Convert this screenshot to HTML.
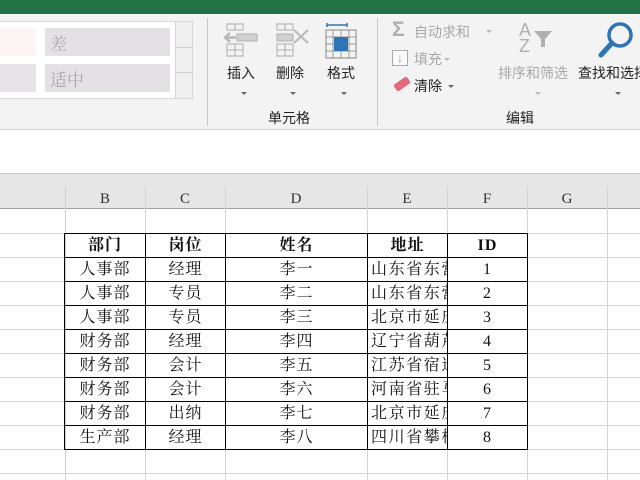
<!DOCTYPE html>
<html><head><meta charset="utf-8"><style>
*{margin:0;padding:0;box-sizing:border-box}
body{width:640px;height:480px;overflow:hidden;background:#fff;position:relative;font-family:"Liberation Sans","Noto Sans CJK SC",sans-serif}
.a{position:absolute}
.t{position:absolute;font-size:14px;color:#222;white-space:nowrap}
.g{color:#a8a8a8}
.cell{position:absolute;font-family:"Liberation Serif","Noto Serif CJK SC",serif;font-size:16px;color:#111;text-align:center;line-height:24px;height:24px;overflow:hidden;white-space:nowrap}
.vl{position:absolute;width:1px;background:#d4d4d4}
.hl{position:absolute;height:1px;background:#d4d4d4;left:0;width:640px}
.dd{position:absolute;width:0;height:0;border-left:3px solid transparent;border-right:3px solid transparent;border-top:3px solid #666}
td{border:1px solid #000;height:24px;padding:0;text-align:center;line-height:22px;white-space:nowrap;overflow:hidden;max-width:0;letter-spacing:1px}
td.l{text-align:left;padding-left:3px;text-overflow:clip;letter-spacing:1.6px}
</style></head><body>
<div class="a" style="left:0;top:0;width:640px;height:14px;background:#217346"></div>
<div class="a" style="left:0;top:14px;width:640px;height:115px;background:#f3f3f3"></div>
<div class="a" style="left:0;top:129px;width:640px;height:1px;background:#d2d2d2"></div>
<div class="a" style="left:0;top:21px;width:193px;height:78px;background:#fff;border:1px solid #d8d8d8;border-left:none"></div>
<div class="a" style="left:0;top:28px;width:36px;height:28px;background:#fdf4f6"></div>
<div class="a" style="left:0;top:64px;width:36px;height:28px;background:#e6e4e7"></div>
<div class="a" style="left:45px;top:28px;width:125px;height:28px;background:#e3e1e4"></div>
<div class="a" style="left:45px;top:64px;width:125px;height:28px;background:#e3e1e4"></div>
<div class="t g" style="left:50px;top:30px;font-size:17px;font-family:'Noto Serif CJK SC',serif">差</div>
<div class="t g" style="left:50px;top:66px;font-size:17px;font-family:'Noto Serif CJK SC',serif">适中</div>
<div class="a" style="left:175px;top:21px;width:18px;height:78px;background:#f0f0f0;border:1px solid #d8d8d8"></div>
<div class="a" style="left:175px;top:47px;width:18px;height:1px;background:#d0d0d0"></div>
<div class="a" style="left:175px;top:72px;width:18px;height:1px;background:#d0d0d0"></div>
<div class="a" style="left:207px;top:18px;width:1px;height:108px;background:#c8c8c8"></div>
<div class="a" style="left:377px;top:18px;width:1px;height:108px;background:#c8c8c8"></div>
<svg class="a" style="left:222px;top:20px" width="150" height="40">
<g fill="none" stroke="#b8b8b8" stroke-width="1.2">
<rect x="5" y="4" width="16" height="6"/><line x1="13" y1="4" x2="13" y2="10"/>
<rect x="5" y="24" width="16" height="12"/><line x1="13" y1="24" x2="13" y2="36"/><line x1="5" y1="30" x2="21" y2="30"/>
<rect x="15" y="14" width="20" height="7" fill="#d0d0d0"/>
<path d="M14 17.5H3M8 13l-5 4.5 5 4.5" stroke-width="2.5"/>
<rect x="55" y="4" width="16" height="6"/><line x1="63" y1="4" x2="63" y2="10"/>
<rect x="55" y="24" width="16" height="12"/><line x1="63" y1="24" x2="63" y2="36"/><line x1="55" y1="30" x2="71" y2="30"/>
<rect x="55" y="14" width="16" height="7" fill="#d0d0d0"/>
<path d="M72 10l14 13M86 10L72 23" stroke-width="2"/>
</g>
<g fill="none" stroke="#555" stroke-width="1">
<path d="M105 5h20M105 3v4M125 3v4" stroke="#2e75b6" stroke-width="1.5"/>
<rect x="104" y="10" width="30" height="28" stroke="#888"/>
<path d="M104 17h30M104 24h30M104 31h30M111 10v28M119 10v28M127 10v28" stroke="#999"/>
</g>
<rect x="112" y="17" width="14" height="14" fill="#2e75b6"/>
</svg>
<div class="t" style="left:227px;top:63px">插入</div>
<div class="t" style="left:276px;top:63px">删除</div>
<div class="t" style="left:327px;top:63px">格式</div>
<div class="dd" style="left:241px;top:92px"></div>
<div class="dd" style="left:290px;top:92px"></div>
<div class="dd" style="left:341px;top:92px"></div>
<div class="t" style="left:268px;top:108px">单元格</div>
<div class="t" style="left:392px;top:18px;font-size:21px;font-weight:bold;color:#b0b0b0">Σ</div>
<div class="t g" style="left:414px;top:22px">自动求和</div>
<div class="dd" style="left:486px;top:30px;border-top-color:#bbb"></div>
<div class="a" style="left:392px;top:50px;width:16px;height:16px;border:1px solid #aaa;background:#fafafa;color:#999;font-size:12px;text-align:center;line-height:14px">↓</div>
<div class="t g" style="left:414px;top:49px">填充</div>
<div class="dd" style="left:444px;top:58px;border-top-color:#bbb"></div>
<div class="a" style="left:394px;top:80px;width:16px;height:8px;background:#e06b7c;transform:rotate(-35deg);border-radius:2px"></div>
<div class="t" style="left:414px;top:76px">清除</div>
<div class="dd" style="left:448px;top:85px"></div>
<div class="t g" style="left:519px;top:22px;font-size:18px;line-height:16px;color:#b0b0b0">A<br>Z</div>
<svg class="a" style="left:533px;top:29px" width="22" height="20"><path d="M1 2h18l-7 8v8h-4v-8z" fill="#b0b0b0"/></svg>
<div class="t g" style="left:498px;top:63px">排序和筛选</div>
<div class="dd" style="left:535px;top:92px;border-top-color:#bbb"></div>
<svg class="a" style="left:596px;top:20px" width="44" height="40"><circle cx="24" cy="15" r="11" fill="none" stroke="#2e75b6" stroke-width="3.5"/><path d="M16 23L5 35" stroke="#2e75b6" stroke-width="5" stroke-linecap="round"/></svg>
<div class="t" style="left:578px;top:63px">查找和选择</div>
<div class="dd" style="left:615px;top:92px"></div>
<div class="t" style="left:506px;top:108px">编辑</div>
<div class="a" style="left:0;top:173px;width:640px;height:36px;background:#e6e6e6;border-top:1px solid #c6c6c6;border-bottom:1px solid #9f9f9f"></div>
<div class="vl" style="left:65px;top:186px;height:294px;background:#d0d0d0"></div>
<div class="vl" style="left:145px;top:186px;height:294px"></div>
<div class="vl" style="left:225px;top:186px;height:294px"></div>
<div class="vl" style="left:367px;top:186px;height:294px"></div>
<div class="vl" style="left:447px;top:186px;height:294px"></div>
<div class="vl" style="left:527px;top:186px;height:294px"></div>
<div class="vl" style="left:607px;top:186px;height:294px"></div>
<div class="hl" style="top:233px"></div><div class="hl" style="top:257px"></div><div class="hl" style="top:281px"></div><div class="hl" style="top:305px"></div><div class="hl" style="top:329px"></div><div class="hl" style="top:353px"></div><div class="hl" style="top:377px"></div><div class="hl" style="top:401px"></div><div class="hl" style="top:425px"></div><div class="hl" style="top:449px"></div><div class="hl" style="top:473px"></div>
<div class="cell" style="left:65px;top:187px;width:80px;font-size:15px;color:#333">B</div>
<div class="cell" style="left:145px;top:187px;width:80px;font-size:15px;color:#333">C</div>
<div class="cell" style="left:225px;top:187px;width:142px;font-size:15px;color:#333">D</div>
<div class="cell" style="left:367px;top:187px;width:80px;font-size:15px;color:#333">E</div>
<div class="cell" style="left:447px;top:187px;width:80px;font-size:15px;color:#333">F</div>
<div class="cell" style="left:527px;top:187px;width:80px;font-size:15px;color:#333">G</div>
<table class="a" style="left:64px;top:233px;border-collapse:collapse;font-family:'Liberation Serif','Noto Serif CJK SC',serif;font-size:16px;color:#111">
<colgroup><col style="width:81px"><col style="width:80px"><col style="width:142px"><col style="width:80px"><col style="width:80px"></colgroup>
<tr style="font-weight:bold"><td>部门</td><td>岗位</td><td>姓名</td><td>地址</td><td>ID</td></tr>
<tr><td>人事部</td><td>经理</td><td>李一</td><td class="l">山东省东营</td><td>1</td></tr>
<tr><td>人事部</td><td>专员</td><td>李二</td><td class="l">山东省东营</td><td>2</td></tr>
<tr><td>人事部</td><td>专员</td><td>李三</td><td class="l">北京市延庆</td><td>3</td></tr>
<tr><td>财务部</td><td>经理</td><td>李四</td><td class="l">辽宁省葫芦</td><td>4</td></tr>
<tr><td>财务部</td><td>会计</td><td>李五</td><td class="l">江苏省宿迁</td><td>5</td></tr>
<tr><td>财务部</td><td>会计</td><td>李六</td><td class="l">河南省驻马</td><td>6</td></tr>
<tr><td>财务部</td><td>出纳</td><td>李七</td><td class="l">北京市延庆</td><td>7</td></tr>
<tr><td>生产部</td><td>经理</td><td>李八</td><td class="l">四川省攀枝</td><td>8</td></tr>
</table>
</body></html>
